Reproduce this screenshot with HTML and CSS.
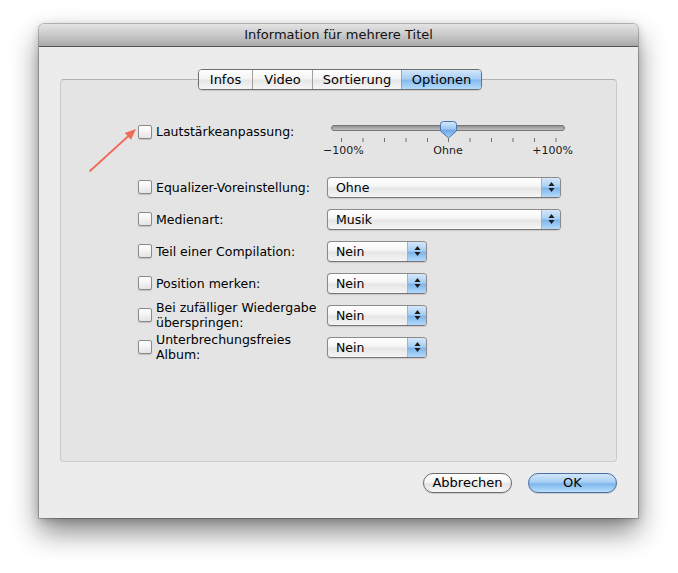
FILE: index.html
```html
<!DOCTYPE html>
<html lang="de">
<head>
<meta charset="utf-8">
<title>Information für mehrere Titel</title>
<link rel="stylesheet" href="styles.css">
</head>
<body>
<div class="window">
  <div class="titlebar">Information für mehrere Titel</div>
  <div class="content">
    <div class="panel">
      <div class="tabs">
        <div class="tab tab-infos">Infos</div>
        <div class="tab tab-video">Video</div>
        <div class="tab tab-sort">Sortierung</div>
        <div class="tab tab-opt active">Optionen</div>
      </div>
      <div class="options">
        <div class="row slider-row">
          <span class="check"></span>
          <span class="label">Lautstärkeanpassung:</span>
          <div class="slider">
            <svg class="slider-svg" width="240" height="22" viewBox="0 0 240 22">
              <defs>
                <linearGradient id="trk" x1="0" y1="0" x2="0" y2="1">
                  <stop offset="0" stop-color="#8e8e8e"/>
                  <stop offset="1" stop-color="#c4c4c4"/>
                </linearGradient>
                <linearGradient id="thb" x1="0" y1="0" x2="0" y2="1">
                  <stop offset="0" stop-color="#d4e8fb"/>
                  <stop offset="0.45" stop-color="#9cc7f1"/>
                  <stop offset="0.55" stop-color="#6fa8e6"/>
                  <stop offset="1" stop-color="#a8d3fa"/>
                </linearGradient>
              </defs>
              <rect x="4.5" y="4.5" width="233" height="5" rx="2.5" fill="url(#trk)" stroke="#767676"/>
              <g stroke="#707070" stroke-width="1">
                <line x1="14.5" y1="17" x2="14.5" y2="21"/>
                <line x1="36" y1="17" x2="36" y2="21"/>
                <line x1="57.5" y1="17" x2="57.5" y2="21"/>
                <line x1="79" y1="17" x2="79" y2="21"/>
                <line x1="100.5" y1="17" x2="100.5" y2="21"/>
                <line x1="121.5" y1="17" x2="121.5" y2="21"/>
                <line x1="143" y1="17" x2="143" y2="21"/>
                <line x1="164.5" y1="17" x2="164.5" y2="21"/>
                <line x1="186" y1="17" x2="186" y2="21"/>
                <line x1="207.5" y1="17" x2="207.5" y2="21"/>
                <line x1="229" y1="17" x2="229" y2="21"/>
              </g>
              <path d="M113.5,3.5 Q113.5,0.5 116.5,0.5 L126.5,0.5 Q129.5,0.5 129.5,3.5 L129.5,10 L121.5,17 L113.5,10 Z" fill="url(#thb)" stroke="#4f74ad"/>
            </svg>
            <div class="slider-labels">
              <span>−100%</span>
              <span>Ohne</span>
              <span>+100%</span>
            </div>
          </div>
        </div>

        <div class="row">
          <span class="check"></span>
          <span class="label">Equalizer-Voreinstellung:</span>
          <div class="popup popup-wide"><span class="popup-text">Ohne</span><span class="popup-arrows"><svg width="7" height="12" viewBox="0 0 7 12"><path d="M3.5,1 L6.5,5 L0.5,5 Z M0.5,7 L6.5,7 L3.5,11 Z" fill="#1c1c1c"/></svg></span></div>
        </div>

        <div class="row">
          <span class="check"></span>
          <span class="label">Medienart:</span>
          <div class="popup popup-wide"><span class="popup-text">Musik</span><span class="popup-arrows"><svg width="7" height="12" viewBox="0 0 7 12"><path d="M3.5,1 L6.5,5 L0.5,5 Z M0.5,7 L6.5,7 L3.5,11 Z" fill="#1c1c1c"/></svg></span></div>
        </div>

        <div class="row">
          <span class="check"></span>
          <span class="label">Teil einer Compilation:</span>
          <div class="popup popup-small"><span class="popup-text">Nein</span><span class="popup-arrows"><svg width="7" height="12" viewBox="0 0 7 12"><path d="M3.5,1 L6.5,5 L0.5,5 Z M0.5,7 L6.5,7 L3.5,11 Z" fill="#1c1c1c"/></svg></span></div>
        </div>

        <div class="row">
          <span class="check"></span>
          <span class="label">Position merken:</span>
          <div class="popup popup-small"><span class="popup-text">Nein</span><span class="popup-arrows"><svg width="7" height="12" viewBox="0 0 7 12"><path d="M3.5,1 L6.5,5 L0.5,5 Z M0.5,7 L6.5,7 L3.5,11 Z" fill="#1c1c1c"/></svg></span></div>
        </div>

        <div class="row">
          <span class="check"></span>
          <span class="label two-line">Bei zufälliger Wiedergabe<br>überspringen:</span>
          <div class="popup popup-small"><span class="popup-text">Nein</span><span class="popup-arrows"><svg width="7" height="12" viewBox="0 0 7 12"><path d="M3.5,1 L6.5,5 L0.5,5 Z M0.5,7 L6.5,7 L3.5,11 Z" fill="#1c1c1c"/></svg></span></div>
        </div>

        <div class="row">
          <span class="check"></span>
          <span class="label two-line">Unterbrechungsfreies<br>Album:</span>
          <div class="popup popup-small"><span class="popup-text">Nein</span><span class="popup-arrows"><svg width="7" height="12" viewBox="0 0 7 12"><path d="M3.5,1 L6.5,5 L0.5,5 Z M0.5,7 L6.5,7 L3.5,11 Z" fill="#1c1c1c"/></svg></span></div>
        </div>
      </div>
    </div>
    <div class="buttons">
      <div class="btn">Abbrechen</div>
      <div class="btn btn-default">OK</div>
    </div>
  </div>
</div>
<svg class="annotation" width="65" height="60" viewBox="0 0 65 60">
  <line x1="10" y1="51" x2="49" y2="15.5" stroke="#f06a5a" stroke-width="1.8" stroke-linecap="round"/>
  <path d="M56,9 L51,19.8 L44.8,13 Z" fill="#f06a5a"/>
</svg>
</body>
</html>
```

FILE: styles.css
```css
* {
  box-sizing: border-box;
}

html {
  background: #ffffff;
}

body {
  margin: 0;
  min-height: 573px;
  padding-top: 24px;
  background: #ffffff;
  font-family: "DejaVu Sans", "Liberation Sans", sans-serif;
  font-size: 12.5px;
  color: #000000;
}

.window {
  margin: 0 0 0 39px;
  width: 599px;
  height: 494px;
  background: #ececec;
  border-radius: 5px 5px 0 0;
  box-shadow: 0 14px 28px rgba(0, 0, 0, 0.48), 0 2px 8px rgba(0, 0, 0, 0.2), 0 0 0 1px rgba(0, 0, 0, 0.22);
  display: flex;
  flex-direction: column;
}

.titlebar {
  height: 23px;
  line-height: 22px;
  text-align: center;
  font-size: 13px;
  color: #111111;
  background: linear-gradient(#e4e4e4, #c9c9c9 50%, #a9a9a9);
  border-bottom: 1px solid #525252;
  border-radius: 5px 5px 0 0;
}

.content {
  flex: 1;
  padding: 32px 21px 0;
  display: flex;
  flex-direction: column;
}

.panel {
  height: 383px;
  background: #e4e4e4;
  border: 1px solid #cacaca;
  border-top-color: #b2b2b2;
  border-radius: 4px;
  display: flex;
  flex-direction: column;
}

.tabs {
  align-self: center;
  margin-top: -11px;
  margin-left: 3px;
  height: 21px;
  display: flex;
  border: 1px solid #6e6e6e;
  border-radius: 4px;
  overflow: hidden;
  box-shadow: 0 1px 1px rgba(0, 0, 0, 0.12);
}

.tab {
  height: 19px;
  line-height: 19px;
  font-size: 13px;
  text-align: center;
  background: linear-gradient(#ffffff, #f4f4f4 45%, #e6e6e6 55%, #f6f6f6);
  border-right: 1px solid #a0a0a0;
}

.tab-infos { width: 54px; }
.tab-video { width: 60px; }
.tab-sort { width: 89px; }
.tab-opt { width: 79px; border-right: 0; }

.tab.active {
  background: linear-gradient(#d3e7fb, #a8cff5 45%, #86bbee 55%, #b5dcfc);
}

.options {
  margin-top: 31px;
  display: flex;
  flex-direction: column;
}

.row {
  display: grid;
  grid-template-columns: 14px 167px auto;
  column-gap: 4px;
  align-items: center;
  height: 32px;
  padding-left: 77px;
}

.slider-row {
  height: 50px;
  align-items: start;
}

.slider-row .check {
  margin-top: 4px;
}

.slider-row .label {
  margin-top: 4px;
  line-height: 14px;
}

.check {
  width: 14px;
  height: 14px;
  border: 1px solid #8a8a8a;
  border-radius: 2px;
  background: linear-gradient(#ffffff, #f3f3f3 50%, #e4e4e4);
  box-shadow: 0 1px 1px rgba(0, 0, 0, 0.15);
}

.label {
  white-space: nowrap;
  line-height: 15px;
}

.slider {
  width: 250px;
}

.slider-svg {
  display: block;
}

.slider-labels {
  margin-left: -4px;
  margin-top: 1px;
  width: 250px;
  display: flex;
  justify-content: space-between;
  font-size: 11px;
  line-height: 13px;
  color: #1a1a1a;
}

.popup {
  height: 21px;
  display: flex;
  border: 1px solid #8a8a8a;
  border-bottom-color: #767676;
  border-radius: 4px;
  background: linear-gradient(#ffffff, #f7f7f7 40%, #e6e6e6 55%, #f5f5f5);
  box-shadow: 0 1px 1px rgba(0, 0, 0, 0.12);
  overflow: hidden;
}

.popup-wide {
  width: 234px;
}

.popup-small {
  width: 100px;
}

.popup-text {
  flex: 1;
  padding-left: 8px;
  line-height: 19px;
}

.popup-arrows {
  width: 19px;
  display: flex;
  align-items: center;
  justify-content: center;
  background: linear-gradient(#d4e8fb, #a9cff4 45%, #7fb5eb 55%, #b3dbfc);
  border-left: 1px solid #9bb5d6;
}

.popup-arrows svg {
  display: block;
}

.buttons {
  margin-top: 11px;
  display: flex;
  justify-content: flex-end;
  gap: 16px;
}

.btn {
  width: 89px;
  height: 20px;
  line-height: 18px;
  text-align: center;
  font-size: 13px;
  border: 1px solid #6b6b6b;
  border-radius: 10px;
  background: linear-gradient(#ffffff, #f6f6f6 45%, #e4e4e4 55%, #f7f7f7);
  box-shadow: 0 1px 1px rgba(0, 0, 0, 0.15);
}

.btn-default {
  border-color: #4c6e9f;
  background: linear-gradient(#d2e6fb, #a8cff5 45%, #7fb6ec 55%, #b8dffd);
}

.annotation {
  position: absolute;
  left: 80px;
  top: 120px;
}
```
